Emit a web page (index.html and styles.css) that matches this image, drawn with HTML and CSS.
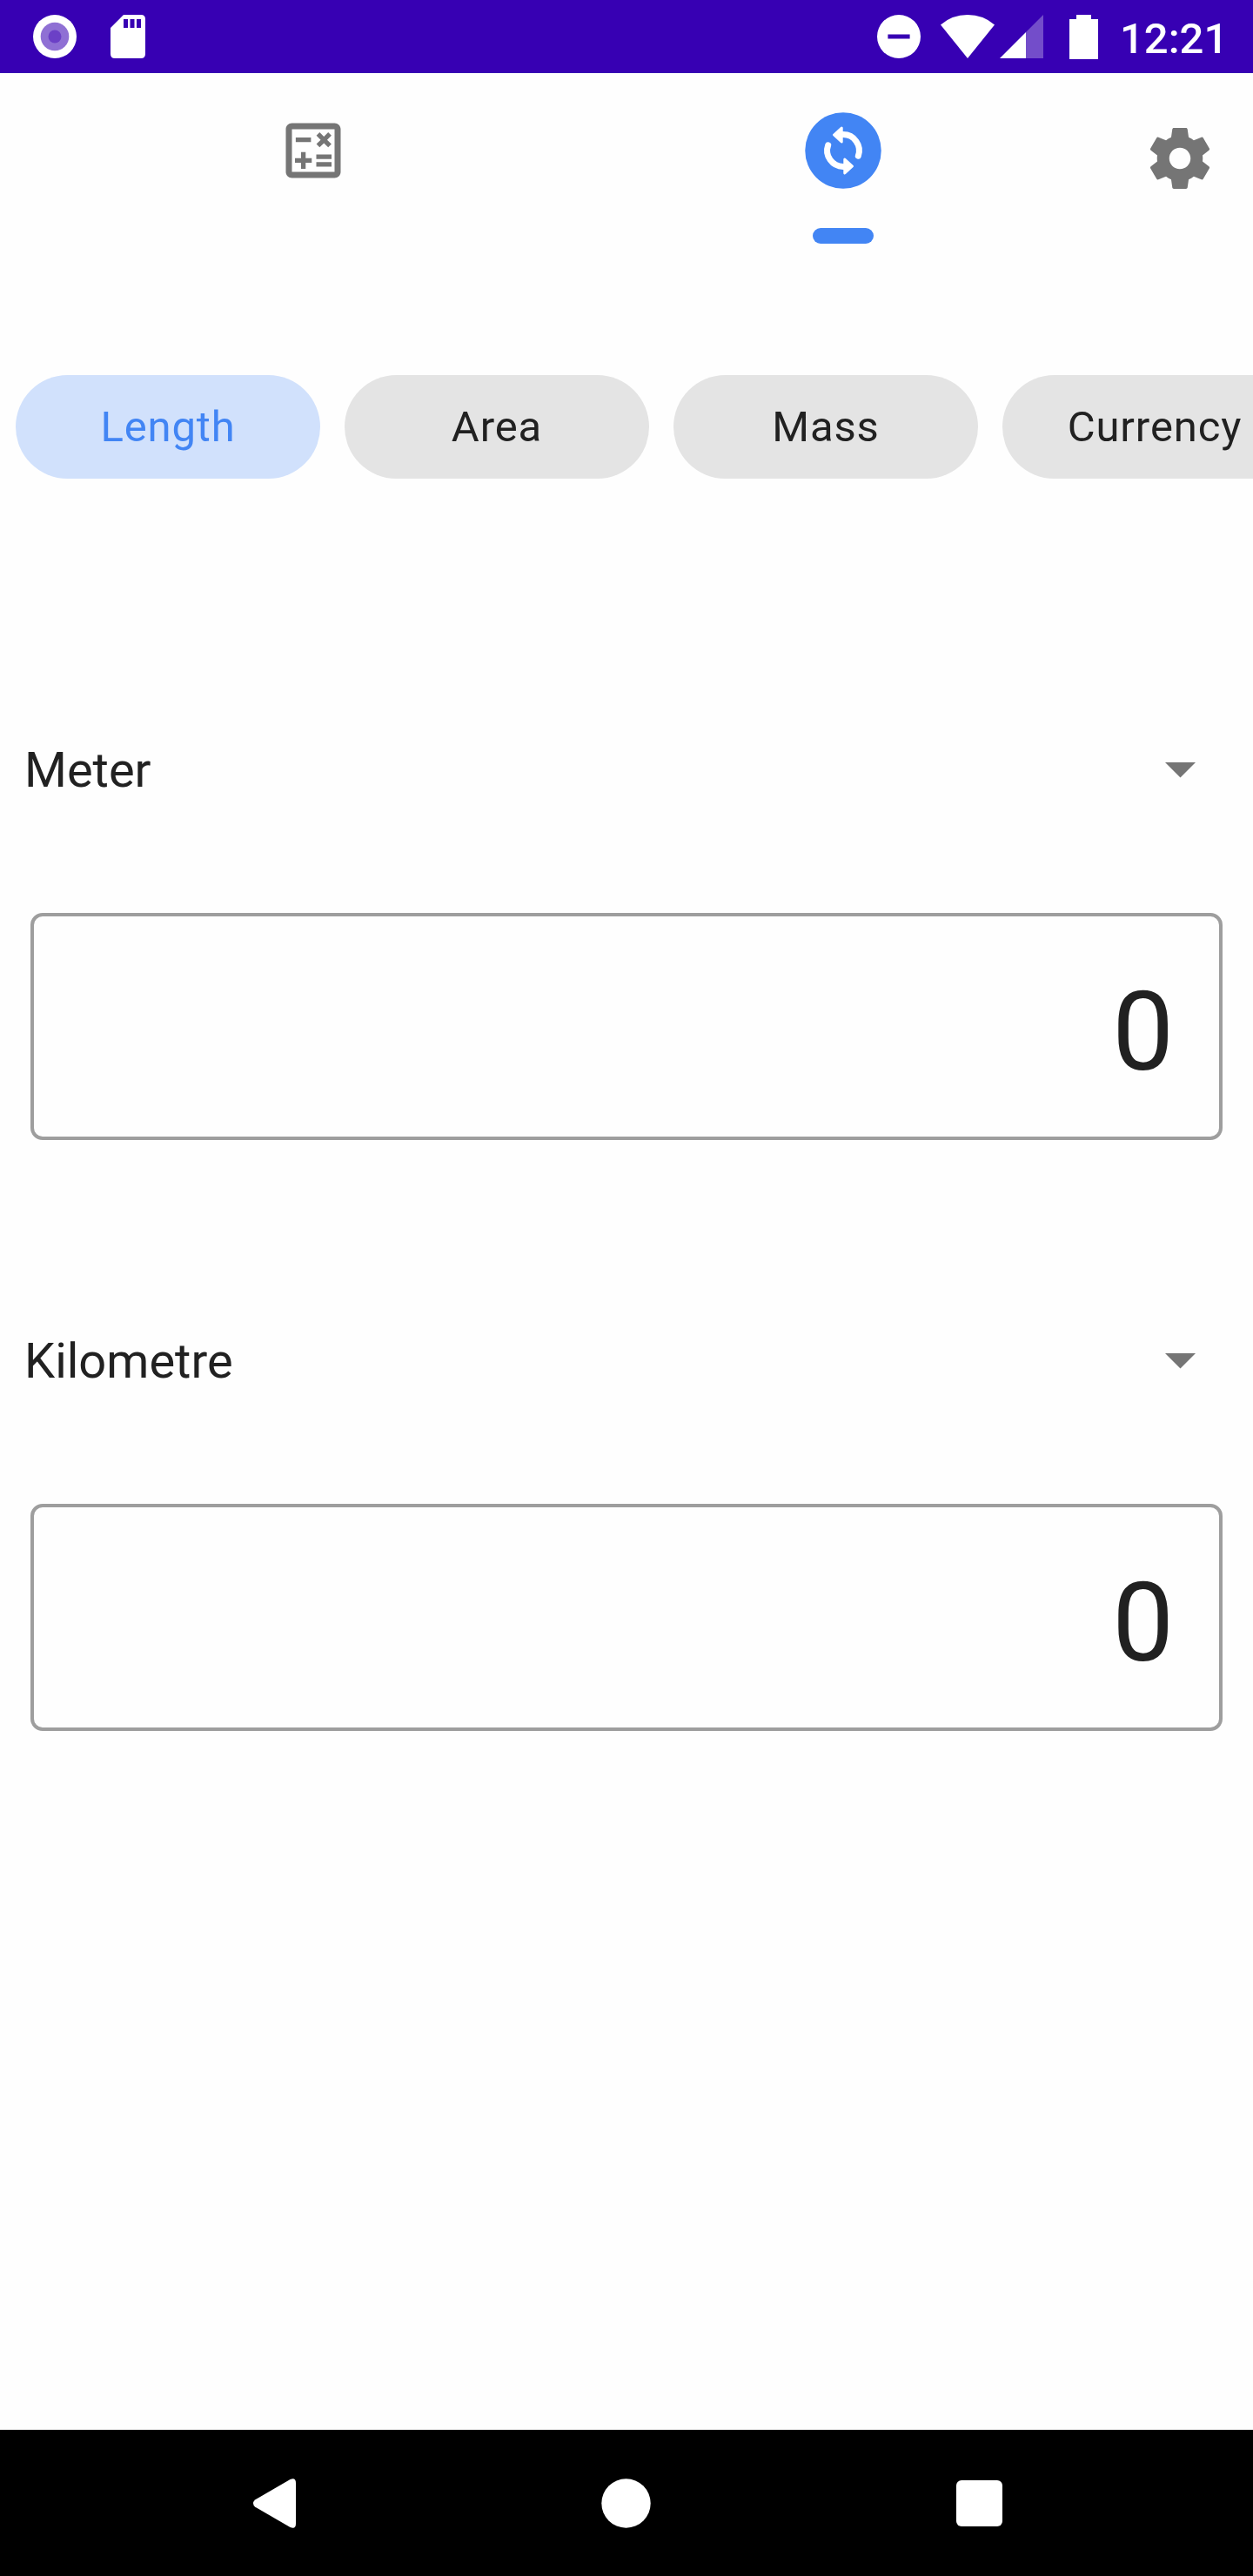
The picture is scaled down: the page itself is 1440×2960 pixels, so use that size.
FILE: index.html
```html
<!DOCTYPE html>
<html lang="en">
<head>
<meta charset="utf-8">
<title>Unit converter</title>
<link rel="stylesheet" href="styles.css">
</head>
<body>
<div class="screen">
  <header class="status-bar">
    <div class="status-group">
      <svg class="status-record" viewBox="0 0 50 50"><circle cx="25" cy="25" r="25" fill="#fff"/><circle cx="25" cy="25" r="16.3" fill="#8f70d4"/><circle cx="25" cy="25" r="7.5" fill="#6b40c6"/></svg>
      <svg class="status-sd" viewBox="0 0 40 50"><path fill="#fff" fill-rule="evenodd" d="M15 0H35Q40 0 40 5V45Q40 50 35 50H5Q0 50 0 45V15ZM15 5V15H20V5ZM22.5 5V15H27.5V5ZM30 5V15H35V5Z"/></svg>
    </div>
    <div class="status-group">
      <svg class="status-dnd" viewBox="0 0 50 50"><path fill="#fff" fill-rule="evenodd" d="M25 0a25 25 0 1 0 0 50a25 25 0 1 0 0-50zM12.4 22.4h25.2v5.2H12.4z"/></svg>
      <svg class="status-wifi" viewBox="0 0 62 50"><path fill="#fff" d="M31 50L0 11.5Q13 0 31 0T62 11.5Z"/></svg>
      <svg class="status-signal" viewBox="0 0 50 50"><path fill="#fff" fill-opacity=".3" d="M30 20L50 0V50H30Z"/><path fill="#fff" d="M0 50L30 20V50Z"/></svg>
      <svg class="status-battery" viewBox="0 0 33 51"><path fill="#fff" d="M8 0H25V5H33V51H0V5H8Z"/></svg>
      <span class="clock">12:21</span>
    </div>
  </header>

  <nav class="top-nav">
    <button class="tab" aria-label="Calculator">
      <svg class="icon" viewBox="0 0 24 24"><path d="M19 3H5c-1.1 0-2 .9-2 2v14c0 1.1.9 2 2 2h14c1.1 0 2-.9 2-2V5c0-1.1-.9-2-2-2zm0 16H5V5h14v14z"/><path d="M6.25 7.72h5v1.5h-5zM13 15.75h5v1.5h-5zM13 13.25h5v1.5h-5zM8 18h1.5v-2h2v-1.5h-2v-2H8v2H6V16h2zM14.09 10.95l1.41-1.41 1.41 1.41 1.06-1.06-1.41-1.42 1.41-1.41L16.91 6 15.5 7.41 14.09 6l-1.06 1.06 1.41 1.41-1.41 1.42z"/></svg>
    </button>
    <button class="tab tab-active" aria-label="Converter">
      <svg class="convert-icon" viewBox="0 0 88 88">
        <circle cx="44" cy="44" r="43.75" fill="#4285f4"/>
        <g id="arrow">
          <path d="M43 25.6H44A18.4 18.4 0 0 1 61.3 50.2" fill="none" stroke="#fff" stroke-width="7" stroke-linecap="round"/>
          <path d="M33.5 26L42.2 18V34Z" fill="#fff" stroke="#fff" stroke-width="3" stroke-linejoin="round"/>
        </g>
        <use href="#arrow" transform="rotate(180 44 44)"/>
      </svg>
      <span class="tab-indicator"></span>
    </button>
    <button class="settings" aria-label="Settings">
      <svg class="icon" viewBox="0 0 24 24"><path d="M19.43 12.98c.04-.32.07-.64.07-.98s-.03-.66-.07-.98l2.11-1.65c.19-.15.24-.42.12-.64l-2-3.46c-.12-.22-.39-.3-.61-.22l-2.49 1c-.52-.4-1.08-.73-1.69-.98l-.38-2.65C14.46 2.18 14.25 2 14 2h-4c-.25 0-.46.18-.49.42l-.38 2.65c-.61.25-1.17.59-1.69.98l-2.49-1c-.23-.09-.49 0-.61.22l-2 3.46c-.13.22-.07.49.12.64l2.11 1.65c-.04.32-.07.65-.07.98s.03.66.07.98l-2.11 1.65c-.19.15-.24.42-.12.64l2 3.46c.12.22.39.3.61.22l2.49-1c.52.4 1.08.73 1.69.98l.38 2.65c.03.24.24.42.49.42h4c.25 0 .46-.18.49-.42l.38-2.65c.61-.25 1.17-.59 1.69-.98l2.49 1c.23.09.49 0 .61-.22l2-3.46c.12-.22.07-.49-.12-.64l-2.11-1.65zM12 15.5c-1.93 0-3.5-1.57-3.5-3.5s1.57-3.5 3.5-3.5 3.5 1.57 3.5 3.5-1.57 3.5-3.5 3.5z"/></svg>
    </button>
  </nav>

  <div class="chips">
    <button class="chip chip-selected">Length</button>
    <button class="chip">Area</button>
    <button class="chip">Mass</button>
    <button class="chip">Currency</button>
  </div>

  <main class="converter">
    <section class="unit">
      <div class="unit-select"><span>Meter</span><svg class="caret" viewBox="0 0 35 17.5"><path d="M0 0H35L17.5 17.5Z"/></svg></div>
      <div class="unit-value">0</div>
    </section>
    <section class="unit">
      <div class="unit-select"><span>Kilometre</span><svg class="caret" viewBox="0 0 35 17.5"><path d="M0 0H35L17.5 17.5Z"/></svg></div>
      <div class="unit-value">0</div>
    </section>
  </main>

  <footer class="system-nav">
    <svg class="nav-back" viewBox="0 0 49 57"><path fill="#fff" d="M2 24.5L42.5 1Q49 -1.5 49 5V52Q49 58.500 42.500 56L2 32.500Q-2 28.500 2 24.500Z"/></svg>
    <svg class="nav-home" viewBox="0 0 57 57"><circle cx="28.500" cy="28.500" r="28.200" fill="#fff"/></svg>
    <span class="nav-recent"></span>
  </footer>
</div>
</body>
</html>
```
FILE: styles.css
```css
* {
  box-sizing: border-box;
}

body {
  margin: 0;
  background: #fefefe;
  font-family: Roboto, "Liberation Sans", sans-serif;
  color: #212121;
}

button {
  margin: 0;
  padding: 0;
  border: 0;
  background: none;
  font: inherit;
  color: inherit;
}

svg {
  display: block;
  flex: none;
}

.screen {
  display: flex;
  flex-direction: column;
  width: 1440px;
  height: 2960px;
  overflow: hidden;
}

/* Status bar */
.status-bar {
  display: flex;
  justify-content: space-between;
  height: 84px;
  padding: 0 35px 0 38px;
  background: #3700b3;
  flex: none;
}

.status-group {
  display: flex;
  align-items: center;
}

.status-record { width: 50px; height: 50px; }
.status-sd { width: 40px; height: 50px; margin-left: 39px; }
.status-dnd { width: 50px; height: 50px; margin-right: 23px; }
.status-wifi { width: 62px; height: 50px; margin-right: 6px; }
.status-signal { width: 50px; height: 50px; margin-right: 30px; }
.status-battery { width: 33px; height: 51px; margin-right: 25px; }

.clock {
  width: 118px;
  padding-top: 5px;
  font-size: 49px;
  font-weight: 500;
  line-height: 60px;
  color: #fff;
}

/* Tabs and settings */
.top-nav {
  display: grid;
  grid-template-columns: 720px 497px 1fr;
  align-items: start;
  height: 347px;
  flex: none;
}

.tab {
  display: flex;
  flex-direction: column;
  align-items: center;
  padding-top: 47px;
}

.tab-active {
  padding-top: 45px;
}

.icon {
  width: 84px;
  height: 84px;
  fill: #757575;
}

.convert-icon {
  width: 88px;
  height: 88px;
}

.tab-indicator {
  width: 70px;
  height: 18px;
  margin-top: 45px;
  border-radius: 9px;
  background: #4285f4;
}

.settings {
  justify-self: end;
  padding: 56px 42px 0 0;
}

/* Category chips */
.chips {
  display: flex;
  gap: 28px;
  height: 119px;
  padding-left: 18px;
  flex: none;
}

.chip {
  flex: none;
  width: 350px;
  border-radius: 60px;
  background: #e4e4e4;
  font-size: 49px;
  line-height: 119px;
  letter-spacing: 0.875px;
  text-align: center;
}

.chip-selected {
  background: #d1e1fc;
  color: #4285f4;
}

/* Converter */
.converter {
  flex: 1;
  padding-top: 251px;
}

.unit {
  height: 679px;
}

.unit-select {
  display: flex;
  align-items: center;
  justify-content: space-between;
  height: 168px;
  padding: 0 66px 0 28px;
  font-size: 56px;
}

.caret {
  width: 35px;
  height: 17.5px;
  fill: #757575;
}

.unit-value {
  height: 261px;
  margin: 80px 35px 0;
  padding: 7px 52px 0 52px;
  border: 4px solid #9e9e9e;
  border-radius: 14px;
  font-size: 126px;
  line-height: 253px;
  text-align: right;
}

/* System navigation */
.system-nav {
  display: grid;
  grid-template-columns: 631px 177px 1fr;
  align-items: center;
  height: 168px;
  background: #000;
  flex: none;
}

.nav-back { width: 49px; height: 57px; justify-self: center; }
.nav-home { width: 57px; height: 57px; justify-self: center; }

.nav-recent {
  width: 53px;
  height: 53px;
  margin-left: 291px;
  border-radius: 6px;
  background: #fff;
}
```
